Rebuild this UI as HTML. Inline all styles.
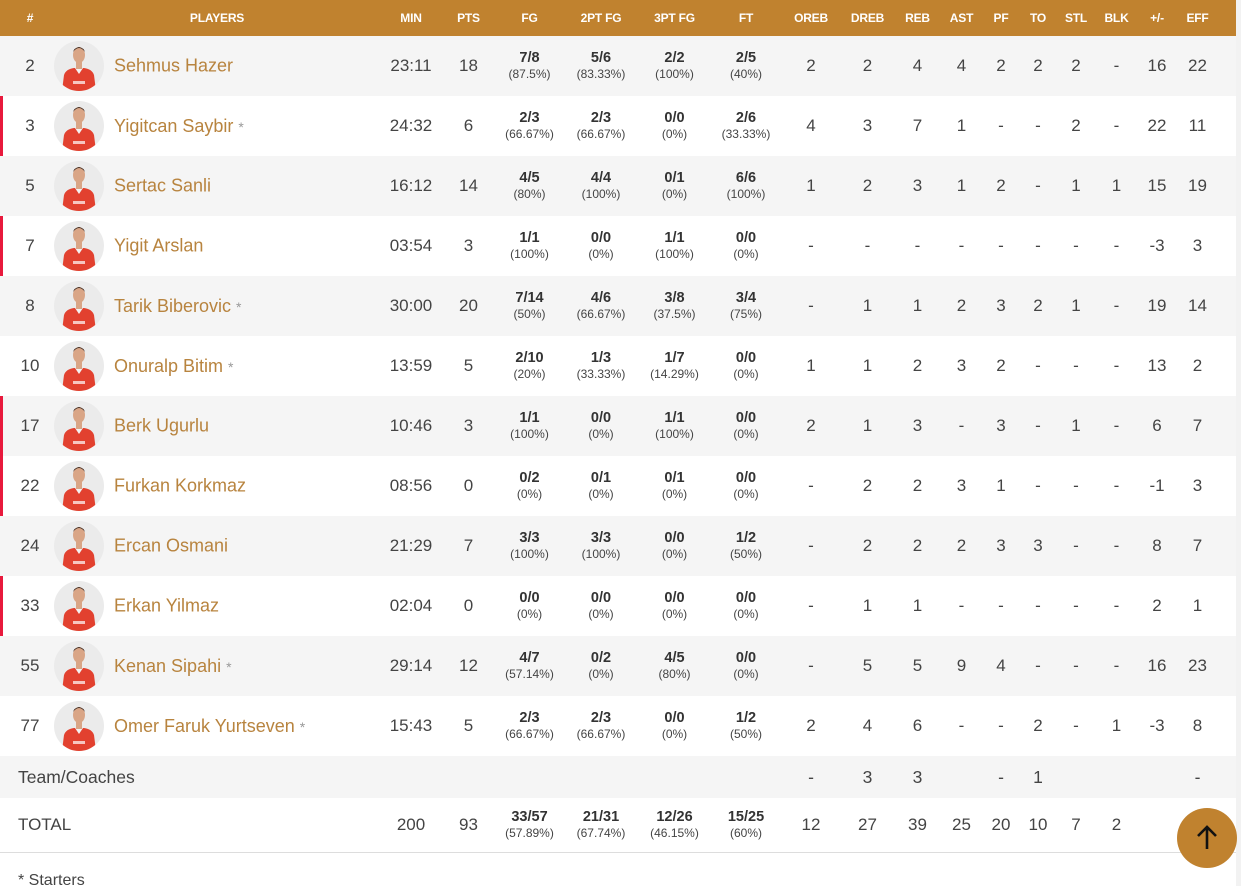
<!DOCTYPE html>
<html><head><meta charset="utf-8"><style>
*{margin:0;padding:0;box-sizing:border-box}
body{width:1241px;height:886px;overflow:hidden;background:#fff;font-family:"Liberation Sans",Arial,sans-serif;color:#444;position:relative}
table{position:absolute;left:0;top:0;width:1236px;border-collapse:collapse;table-layout:fixed}
th{background:#C0822F;color:#fff;font-size:12px;font-weight:bold;height:36px;text-align:center;letter-spacing:-0.2px}
td{text-align:center;font-size:17px;height:60px;color:#444;padding:0}
tr.g td{background:#f5f5f5}
td.n{text-align:left;white-space:nowrap}
td.n span.nm{color:#B8843F;font-size:18px;vertical-align:middle}
td.n svg{vertical-align:middle;margin-right:10px}
.s{color:#999;font-size:14px}
td b{display:block;font-size:14.5px;color:#333;line-height:16px}
td i{display:block;font-style:normal;font-size:12px;color:#444;line-height:16px}
tr.r td:first-child{box-shadow:inset 3px 0 0 #E8193C}
tr.tc td{height:42px;font-size:17.5px}
tr.tot td{height:54px;border-bottom:1px solid #ddd}
.up{position:absolute;left:1177px;top:808px;width:60px;height:60px;border-radius:50%;background:#C0822F}
.edge{position:absolute;left:1236px;top:0;width:5px;height:886px;background:#f2f2f2}
.st{position:absolute;left:18px;top:872px;font-size:16px;color:#444}
</style></head><body>
<svg width="0" height="0" style="position:absolute"><defs><symbol id="av" viewBox="0 0 50 50"><circle cx="25" cy="25" r="25" fill="#ebebeb"/><clipPath id="cc"><circle cx="25" cy="25" r="25"/></clipPath><g clip-path="url(#cc)"><path d="M8 50 L10 34 Q12 28 20 27 L30 27 Q38 28 40 34 L42 50Z" fill="#E2412F"/><path d="M21 27 L25 33 L29 27Z" fill="#f3f3f3"/><rect x="22" y="20" width="6" height="8" fill="#d9a586"/><ellipse cx="25" cy="14" rx="6" ry="8" fill="#d9a586"/><path d="M19 11 Q25 3 31 11 Q30 7 25 6 Q20 7 19 11Z" fill="#3a2a22"/><rect x="19" y="40" width="12" height="3" fill="#fff" opacity=".7"/></g></symbol></defs></svg>
<table>
<colgroup><col style="width:54px"><col style="width:326px"><col style="width:62px"><col style="width:53px"><col style="width:69px"><col style="width:74px"><col style="width:73px"><col style="width:70px"><col style="width:60px"><col style="width:53px"><col style="width:47px"><col style="width:41px"><col style="width:38px"><col style="width:36px"><col style="width:40px"><col style="width:41px"><col style="width:40px"><col style="width:59px"></colgroup>
<tr><th style="padding-left:6px">#</th><th>PLAYERS</th><th>MIN</th><th>PTS</th><th>FG</th><th>2PT FG</th><th>3PT FG</th><th>FT</th><th>OREB</th><th>DREB</th><th>REB</th><th>AST</th><th>PF</th><th>TO</th><th>STL</th><th>BLK</th><th>+/-</th><th style="padding-right:18px">EFF</th></tr>
<tr class="g"><td style="padding-left:6px">2</td><td class="n"><svg width="50" height="50"><use href="#av"/></svg><span class="nm">Sehmus Hazer</span></td><td>23:11</td><td>18</td><td><b>7/8</b><i>(87.5%)</i></td><td><b>5/6</b><i>(83.33%)</i></td><td><b>2/2</b><i>(100%)</i></td><td><b>2/5</b><i>(40%)</i></td><td>2</td><td>2</td><td>4</td><td>4</td><td>2</td><td>2</td><td>2</td><td>-</td><td>16</td><td style="padding-right:18px">22</td></tr>
<tr class="r"><td style="padding-left:6px">3</td><td class="n"><svg width="50" height="50"><use href="#av"/></svg><span class="nm">Yigitcan Saybir <span class="s">*</span></span></td><td>24:32</td><td>6</td><td><b>2/3</b><i>(66.67%)</i></td><td><b>2/3</b><i>(66.67%)</i></td><td><b>0/0</b><i>(0%)</i></td><td><b>2/6</b><i>(33.33%)</i></td><td>4</td><td>3</td><td>7</td><td>1</td><td>-</td><td>-</td><td>2</td><td>-</td><td>22</td><td style="padding-right:18px">11</td></tr>
<tr class="g"><td style="padding-left:6px">5</td><td class="n"><svg width="50" height="50"><use href="#av"/></svg><span class="nm">Sertac Sanli</span></td><td>16:12</td><td>14</td><td><b>4/5</b><i>(80%)</i></td><td><b>4/4</b><i>(100%)</i></td><td><b>0/1</b><i>(0%)</i></td><td><b>6/6</b><i>(100%)</i></td><td>1</td><td>2</td><td>3</td><td>1</td><td>2</td><td>-</td><td>1</td><td>1</td><td>15</td><td style="padding-right:18px">19</td></tr>
<tr class="r"><td style="padding-left:6px">7</td><td class="n"><svg width="50" height="50"><use href="#av"/></svg><span class="nm">Yigit Arslan</span></td><td>03:54</td><td>3</td><td><b>1/1</b><i>(100%)</i></td><td><b>0/0</b><i>(0%)</i></td><td><b>1/1</b><i>(100%)</i></td><td><b>0/0</b><i>(0%)</i></td><td>-</td><td>-</td><td>-</td><td>-</td><td>-</td><td>-</td><td>-</td><td>-</td><td>-3</td><td style="padding-right:18px">3</td></tr>
<tr class="g"><td style="padding-left:6px">8</td><td class="n"><svg width="50" height="50"><use href="#av"/></svg><span class="nm">Tarik Biberovic <span class="s">*</span></span></td><td>30:00</td><td>20</td><td><b>7/14</b><i>(50%)</i></td><td><b>4/6</b><i>(66.67%)</i></td><td><b>3/8</b><i>(37.5%)</i></td><td><b>3/4</b><i>(75%)</i></td><td>-</td><td>1</td><td>1</td><td>2</td><td>3</td><td>2</td><td>1</td><td>-</td><td>19</td><td style="padding-right:18px">14</td></tr>
<tr><td style="padding-left:6px">10</td><td class="n"><svg width="50" height="50"><use href="#av"/></svg><span class="nm">Onuralp Bitim <span class="s">*</span></span></td><td>13:59</td><td>5</td><td><b>2/10</b><i>(20%)</i></td><td><b>1/3</b><i>(33.33%)</i></td><td><b>1/7</b><i>(14.29%)</i></td><td><b>0/0</b><i>(0%)</i></td><td>1</td><td>1</td><td>2</td><td>3</td><td>2</td><td>-</td><td>-</td><td>-</td><td>13</td><td style="padding-right:18px">2</td></tr>
<tr class="g r"><td style="padding-left:6px">17</td><td class="n"><svg width="50" height="50"><use href="#av"/></svg><span class="nm">Berk Ugurlu</span></td><td>10:46</td><td>3</td><td><b>1/1</b><i>(100%)</i></td><td><b>0/0</b><i>(0%)</i></td><td><b>1/1</b><i>(100%)</i></td><td><b>0/0</b><i>(0%)</i></td><td>2</td><td>1</td><td>3</td><td>-</td><td>3</td><td>-</td><td>1</td><td>-</td><td>6</td><td style="padding-right:18px">7</td></tr>
<tr class="r"><td style="padding-left:6px">22</td><td class="n"><svg width="50" height="50"><use href="#av"/></svg><span class="nm">Furkan Korkmaz</span></td><td>08:56</td><td>0</td><td><b>0/2</b><i>(0%)</i></td><td><b>0/1</b><i>(0%)</i></td><td><b>0/1</b><i>(0%)</i></td><td><b>0/0</b><i>(0%)</i></td><td>-</td><td>2</td><td>2</td><td>3</td><td>1</td><td>-</td><td>-</td><td>-</td><td>-1</td><td style="padding-right:18px">3</td></tr>
<tr class="g"><td style="padding-left:6px">24</td><td class="n"><svg width="50" height="50"><use href="#av"/></svg><span class="nm">Ercan Osmani</span></td><td>21:29</td><td>7</td><td><b>3/3</b><i>(100%)</i></td><td><b>3/3</b><i>(100%)</i></td><td><b>0/0</b><i>(0%)</i></td><td><b>1/2</b><i>(50%)</i></td><td>-</td><td>2</td><td>2</td><td>2</td><td>3</td><td>3</td><td>-</td><td>-</td><td>8</td><td style="padding-right:18px">7</td></tr>
<tr class="r"><td style="padding-left:6px">33</td><td class="n"><svg width="50" height="50"><use href="#av"/></svg><span class="nm">Erkan Yilmaz</span></td><td>02:04</td><td>0</td><td><b>0/0</b><i>(0%)</i></td><td><b>0/0</b><i>(0%)</i></td><td><b>0/0</b><i>(0%)</i></td><td><b>0/0</b><i>(0%)</i></td><td>-</td><td>1</td><td>1</td><td>-</td><td>-</td><td>-</td><td>-</td><td>-</td><td>2</td><td style="padding-right:18px">1</td></tr>
<tr class="g"><td style="padding-left:6px">55</td><td class="n"><svg width="50" height="50"><use href="#av"/></svg><span class="nm">Kenan Sipahi <span class="s">*</span></span></td><td>29:14</td><td>12</td><td><b>4/7</b><i>(57.14%)</i></td><td><b>0/2</b><i>(0%)</i></td><td><b>4/5</b><i>(80%)</i></td><td><b>0/0</b><i>(0%)</i></td><td>-</td><td>5</td><td>5</td><td>9</td><td>4</td><td>-</td><td>-</td><td>-</td><td>16</td><td style="padding-right:18px">23</td></tr>
<tr><td style="padding-left:6px">77</td><td class="n"><svg width="50" height="50"><use href="#av"/></svg><span class="nm">Omer Faruk Yurtseven <span class="s">*</span></span></td><td>15:43</td><td>5</td><td><b>2/3</b><i>(66.67%)</i></td><td><b>2/3</b><i>(66.67%)</i></td><td><b>0/0</b><i>(0%)</i></td><td><b>1/2</b><i>(50%)</i></td><td>2</td><td>4</td><td>6</td><td>-</td><td>-</td><td>2</td><td>-</td><td>1</td><td>-3</td><td style="padding-right:18px">8</td></tr>
<tr class="g tc"><td colspan="2" style="text-align:left;padding-left:18px">Team/Coaches</td><td></td><td></td><td></td><td></td><td></td><td></td><td>-</td><td>3</td><td>3</td><td></td><td>-</td><td>1</td><td></td><td></td><td></td><td style="padding-right:18px">-</td></tr>
<tr class="tot"><td colspan="2" style="text-align:left;padding-left:18px">TOTAL</td><td>200</td><td>93</td><td><b>33/57</b><i>(57.89%)</i></td><td><b>21/31</b><i>(67.74%)</i></td><td><b>12/26</b><i>(46.15%)</i></td><td><b>15/25</b><i>(60%)</i></td><td>12</td><td>27</td><td>39</td><td>25</td><td>20</td><td>10</td><td>7</td><td>2</td><td></td><td></td></tr>
</table>
<div class="edge"></div>
<div class="st">* Starters</div>
<div class="up"><svg width="60" height="60" viewBox="0 0 60 60"><path d="M30 41 V20 M21 28 L30 19 L39 28" stroke="#111" stroke-width="2.6" fill="none"/></svg></div>
</body></html>
